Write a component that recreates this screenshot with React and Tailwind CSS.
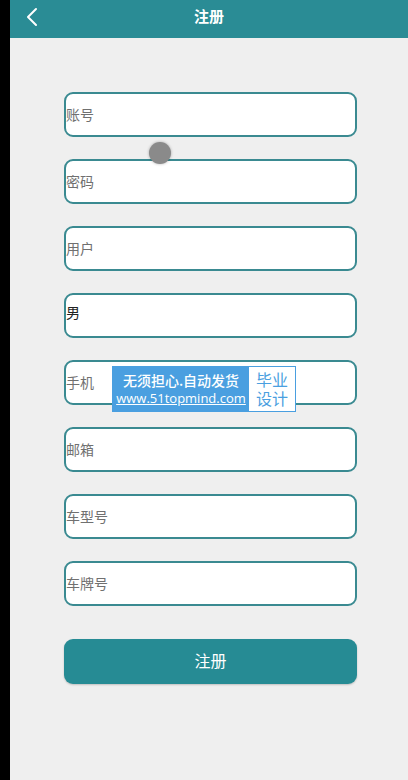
import React from 'react';

const fields = [
  { label: '账号' },
  { label: '密码' },
  { label: '用户' },
  { label: '男', value: true },
  { label: '手机' },
  { label: '邮箱' },
  { label: '车型号' },
  { label: '车牌号' },
];

export default function App() {
  return (
    <div
      className="relative flex min-h-[780px] w-[408px] bg-black"
      style={{ fontFamily: '"Noto Sans CJK SC", "Noto Sans", sans-serif' }}
    >
      <div className="w-[10px] shrink-0 bg-black" />
      <div className="flex flex-1 flex-col bg-[#efefef]">
        {/* header */}
        <div className="relative flex h-[38px] items-center justify-center bg-[#2a8c95] pb-[6px]">
          <svg className="absolute left-[15px] top-[7px]" width="14" height="20" viewBox="0 0 14 20" fill="none">
            <path d="M11 2 L3 10 L11 18" stroke="white" strokeWidth="2" strokeLinecap="round" strokeLinejoin="round" />
          </svg>
          <span className="text-[15px] font-bold text-white">注册</span>
        </div>

        {/* form */}
        <div className="ml-[54px] mt-[54px] flex w-[293px] flex-col gap-[22px]">
          {fields.map((f) => (
            <div
              key={f.label}
              className={`flex h-[45px] items-center rounded-[9px] border-2 border-[#3a8a91] bg-white ${f.value ? 'pb-[6px]' : ''}`}
            >
              <span className={`text-[14px] ${f.value ? 'text-[#222]' : 'text-[#707070]'}`}>{f.label}</span>
            </div>
          ))}
          <button className="mt-[11px] h-[45px] rounded-[9px] bg-[#268b94] pb-[3px] text-[16px] text-white shadow-[0_1px_2px_rgba(0,0,0,0.2)]">
            注册
          </button>
        </div>
      </div>

      {/* touch indicator */}
      <div className="absolute left-[149px] top-[142px] h-[22px] w-[22px] rounded-full bg-[#8a8a8a] shadow-[0_0_3px_rgba(0,0,0,0.3)]" />

      {/* watermark */}
      <div className="absolute left-[112px] top-[366px] flex h-[46px] w-[184px] bg-[#4a9fe0] p-[1px]">
        <div className="flex flex-1 flex-col items-center justify-center leading-none text-white">
          <span className="text-[14px] font-medium">无须担心.自动发货</span>
          <span className="mt-[5px] text-[13px] underline" style={{ fontFamily: '"Open Sans", sans-serif' }}>www.51topmind.com</span>
        </div>
        <div className="flex w-[46px] items-center justify-center bg-white">
          <span className="w-[34px] text-center text-[16px] leading-[19px] text-[#4a9fe0]">毕业设计</span>
        </div>
      </div>
    </div>
  );
}
